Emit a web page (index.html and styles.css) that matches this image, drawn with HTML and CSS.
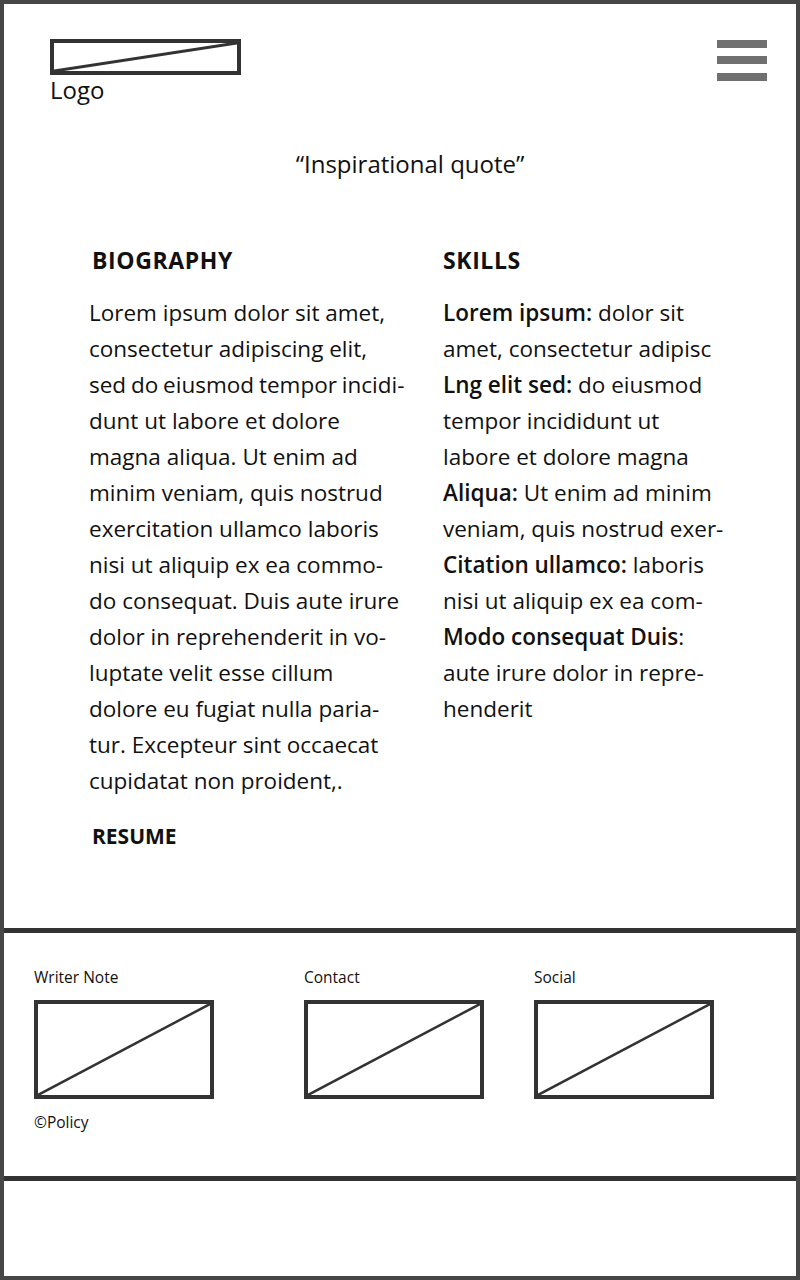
FILE: index.html
```html
<!DOCTYPE html>
<html lang="en">
<head>
  <meta charset="UTF-8" />
  <meta name="viewport" content="width=device-width, initial-scale=1" />
  <title>Portfolio wireframe</title>
  <link rel="stylesheet" href="styles.css">
</head>
<body>
  <div class="page">
    <header class="top">
      <div class="brand">
        <div class="placeholder logo-box">
          <svg viewBox="0 0 100 100" preserveAspectRatio="none"><line x1="0" y1="100" x2="100" y2="0" vector-effect="non-scaling-stroke" /></svg>
        </div>
        <div class="logo-text">Logo</div>
      </div>
      <div class="menu">
        <span></span>
        <span></span>
        <span></span>
      </div>
    </header>

    <main class="content">
      <p class="quote">“Inspirational quote”</p>

      <div class="columns">
        <section class="col">
          <h2 class="indent">BIOGRAPHY</h2>
          <p class="text">
            Lorem ipsum dolor sit amet,<br>
            consectetur adipiscing elit,<br>
            <span class="tight">sed do eiusmod tempor incidi-</span><br>
            dunt ut labore et dolore<br>
            magna aliqua. Ut enim ad<br>
            minim veniam, quis nostrud<br>
            exercitation ullamco laboris<br>
            nisi ut aliquip ex ea commo-<br>
            do consequat. Duis aute irure<br>
            dolor in reprehenderit in vo-<br>
            luptate velit esse cillum<br>
            dolore eu fugiat nulla paria-<br>
            tur. Excepteur sint occaecat<br>
            cupidatat non proident,.
          </p>
          <h2 class="indent resume">RESUME</h2>
        </section>

        <section class="col">
          <h2>SKILLS</h2>
          <p class="text">
            <b>Lorem ipsum:</b> dolor sit<br>
            amet, consectetur adipisc<br>
            <b>Lng elit sed:</b> do eiusmod<br>
            tempor incididunt ut<br>
            labore et dolore magna<br>
            <b>Aliqua:</b> Ut enim ad minim<br>
            veniam, quis nostrud exer-<br>
            <b>Citation ullamco:</b> laboris<br>
            nisi ut aliquip ex ea com-<br>
            <b>Modo consequat Duis</b>:<br>
            aute irure dolor in repre-<br>
            henderit
          </p>
        </section>
      </div>
    </main>

    <footer class="bottom">
      <div class="links">
        <div class="link-item">
          <div class="label">Writer Note</div>
          <div class="placeholder link-box">
            <svg viewBox="0 0 100 100" preserveAspectRatio="none"><line x1="0" y1="100" x2="100" y2="0" vector-effect="non-scaling-stroke" /></svg>
          </div>
        </div>
        <div class="link-item">
          <div class="label">Contact</div>
          <div class="placeholder link-box">
            <svg viewBox="0 0 100 100" preserveAspectRatio="none"><line x1="0" y1="100" x2="100" y2="0" vector-effect="non-scaling-stroke" /></svg>
          </div>
        </div>
        <div class="link-item">
          <div class="label">Social</div>
          <div class="placeholder link-box">
            <svg viewBox="0 0 100 100" preserveAspectRatio="none"><line x1="0" y1="100" x2="100" y2="0" vector-effect="non-scaling-stroke" /></svg>
          </div>
        </div>
      </div>
      <div class="policy">©Policy</div>
    </footer>

    <div class="blank"></div>
  </div>
</body>
</html>
```

FILE: styles.css
```css
body {
  margin: 0;
  font-family: 'Open Sans', 'Noto Sans', sans-serif;
  color: #111;
  background: #fff;
}

.page {
  box-sizing: border-box;
  height: 1280px;
  border: 4px solid #474747;
  display: flex;
  flex-direction: column;
}

/* header */

.top {
  display: flex;
  justify-content: space-between;
  align-items: flex-start;
  padding: 35px 29px 0 46px;
}

.placeholder {
  box-sizing: border-box;
  border: 4px solid #333;
}

.placeholder svg {
  display: block;
  width: 100%;
  height: 100%;
}

.placeholder line {
  stroke: #333;
  stroke-width: 3;
}

.logo-box {
  width: 191px;
  height: 36px;
}

.logo-text {
  font-size: 24px;
  line-height: 28px;
  margin-top: 1px;
}

.menu {
  display: flex;
  flex-direction: column;
  gap: 8px;
  padding-top: 1px;
}

.menu span {
  display: block;
  width: 50px;
  height: 8px;
  background: #707070;
}

.menu span:last-child {
  margin-top: 1px;
}

/* main */

.content {
  flex: 1;
}

.quote {
  margin: 44px 0 0 20px;
  text-align: center;
  font-size: 24px;
  line-height: 32px;
}

.columns {
  display: grid;
  grid-template-columns: 354px 1fr;
  padding-left: 85px;
  margin-top: 65px;
}

h2 {
  margin: 0;
  font-size: 23px;
  line-height: 30px;
  font-weight: 700;
  letter-spacing: 0.6px;
}

h2.indent {
  padding-left: 3px;
}

.text {
  margin: 20px 0 0;
  font-size: 22.5px;
  line-height: 36px;
}

.text b {
  font-weight: 600;
}

.tight {
  word-spacing: -1px;
}

.resume {
  margin-top: 22px;
  font-size: 21px;
  letter-spacing: 0;
}

/* footer */

.bottom {
  height: 253px;
  box-sizing: border-box;
  border-top: 5px solid #333;
  border-bottom: 5px solid #333;
  padding: 34px 0 0 30px;
}

.links {
  display: grid;
  grid-template-columns: 270px 230px 1fr;
}

.label,
.policy {
  font-size: 15.5px;
  line-height: 20px;
}

.link-box {
  width: 180px;
  height: 99px;
  margin-top: 13px;
}

.link-box line {
  stroke-width: 2.5;
}

.policy {
  margin-top: 13px;
}

.blank {
  height: 95px;
}
```
